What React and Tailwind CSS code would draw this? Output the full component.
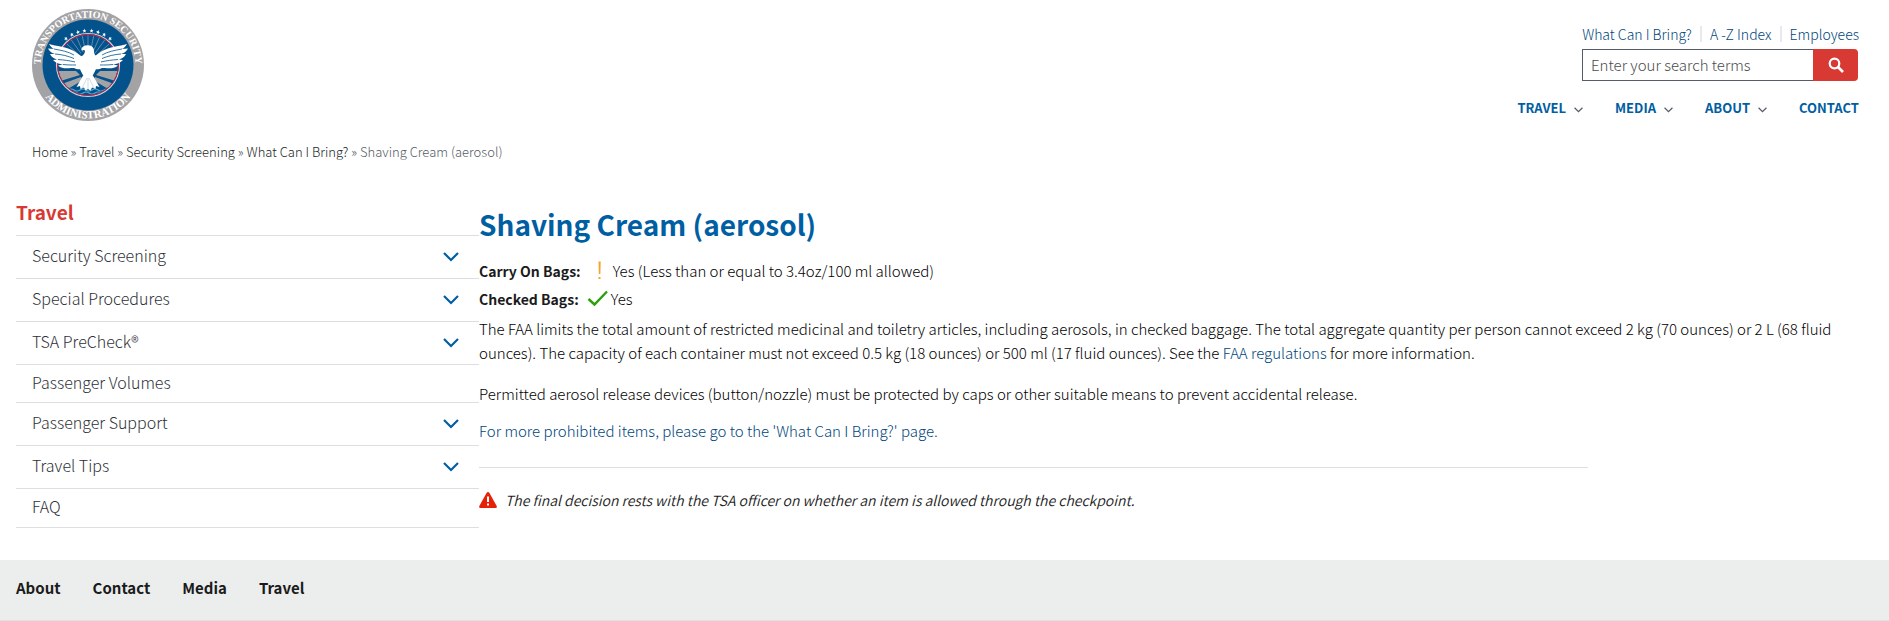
import React from 'react';

const topLinks = ['What Can I Bring?', 'A -Z Index', 'Employees'];
const mainNav = [
  { label: 'TRAVEL', menu: true },
  { label: 'MEDIA', menu: true },
  { label: 'ABOUT', menu: true },
  { label: 'CONTACT', menu: false },
];
const crumbs = ['Home', 'Travel', 'Security Screening', 'What Can I Bring?'];
const sideNav = [
  { label: 'Security Screening', menu: true },
  { label: 'Special Procedures', menu: true },
  { label: 'TSA PreCheck®', menu: true },
  { label: 'Passenger Volumes', menu: false },
  { label: 'Passenger Support', menu: true },
  { label: 'Travel Tips', menu: true },
  { label: 'FAQ', menu: false },
];
const footerLinks = ['About', 'Contact', 'Media', 'Travel'];

const rays = Array.from({ length: 15 }, (_, i) => -84 + i * 12);
const stars = [-40, -28, -17, -6, 6, 17, 28, 40];

function Seal() {
  return (
    <svg viewBox="0 0 112 112" className="size-28" role="img" aria-label="Transportation Security Administration">
      <defs>
        <path id="seal-top" d="M12 74 A47.500 47.500 0 1 1 100 74" />
        <path id="seal-bottom" d="M2.500 56 A53.500 53.500 0 0 0 109.500 56" />
        <clipPath id="seal-disc">
          <circle cx="56" cy="56" r="30" />
        </clipPath>
      </defs>
      <circle cx="56" cy="56" r="56" fill="#a3a3a6" />
      <circle cx="56" cy="56" r="45.500" fill="#03528b" />
      <g clipPath="url(#seal-disc)">
        {rays.map((a) => (
          <path key={a} d="M56 42 V22" stroke="#8fa9c4" strokeWidth="0.600" transform={`rotate(${a} 56 54)`} />
        ))}
        <path d="M24 62 L44 62 L48 66 L25 73z M27 76 L49 68 L51 71 L34 81z M88 62 L68 62 L64 66 L87 73z M85 76 L63 68 L61 71 L78 81z" fill="#a3a3a6" />
        <path d="M36 81 q3 -2 6 0 t6 0 t6 0 t6 0 t6 0 t6 0 t6 0 M39 84 q3 -2 6 0 t6 0 t6 0 t6 0 t6 0 t6 0" fill="none" stroke="#58abd4" strokeWidth="1.200" />
      </g>
      <circle cx="56" cy="56" r="31.500" fill="none" stroke="#c7d2e0" strokeWidth="1.200" />
      <circle cx="56" cy="56" r="30.500" fill="none" stroke="#d2213c" strokeWidth="1" />
      {stars.map((a) => (
        <path
          key={a}
          d="M56 19.400 L56.600 21 L58 21.100 L56.900 22 L57.300 23.500 L56 22.600 L54.700 23.500 L55.100 22 L54 21.100 L55.400 21z"
          fill="#ffffff"
          transform={`rotate(${a} 56 56)`}
        />
      ))}
      {[1, -1].map((s) => (
        <g key={s} transform={s === 1 ? undefined : 'translate(112 0) scale(-1 1)'}>
          <path
            d="M54 50 C49 47 46 45 42 42 C35 38 24 37 17 35 C19 38 20 39 22 40 L16 39.500 C18 43 20 44 23 45 L18 45 C20 49 23 50 26 50.500 L21 51 C24 54 27 55 31 55.500 L26 56.500 C30 60 35 59.500 39 59 L42 59 C45 61 49 60 54 60z"
            fill="#ffffff"
          />
          <path
            d="M22 40 C30 41.500 36 42.500 42 46 M23 45 C30 45.500 36 47 42 49.500 M26 50.500 C32 51 37 51.500 43 53 M31 55.500 C35 56 39 56 44 56"
            fill="none"
            stroke="#03528b"
            strokeWidth="0.800"
          />
        </g>
      ))}
      <path
        d="M49.500 40 C50 37.500 53 36 56.500 36.300 C60 36.600 62 39 62 42 C62 45 63 47 66 48 C67 56 63 62 61 66 H51 C49 62 45 56 46 48 C50 48 53 45.500 53 41.500 C52 40.800 51 40.800 49.500 41.500z"
        fill="#ffffff"
      />
      <path d="M52 65 L44.500 78 L48 77 L48.500 80 L52 78.500 L53.500 81.500 L56 80 L58.500 81.500 L60 78.500 L63.500 80 L64 77 L67.500 78 L60 65z" fill="#ffffff" />
      <path d="M55 69 L50 79 M57 69 L62 79 M56 69 V80" stroke="#9db6cd" strokeWidth="0.500" />
      <g fill="#ffffff" className="font-['Liberation_Serif',serif] font-bold">
        <text textAnchor="middle" className="text-[10px]">
          <textPath href="#seal-top" startOffset="50%">TRANSPORTATION SECURITY</textPath>
        </text>
        <text textAnchor="middle" className="text-[11px]">
          <textPath href="#seal-bottom" startOffset="50%">ADMINISTRATION</textPath>
        </text>
      </g>
    </svg>
  );
}

function Chevron({ className }) {
  return (
    <svg viewBox="0 0 16 10" fill="none" stroke="currentColor" strokeWidth="2.200" className={className} aria-hidden="true">
      <path d="M1 1 L8 8 L15 1" />
    </svg>
  );
}

export default function App() {
  return (
    <div className="bg-white font-['Noto_Sans_CJK_SC',sans-serif] text-[15px] leading-6 font-light text-black">
      <header className="flex items-start justify-between pr-[30px] pl-8">
        <a href="#home" className="mt-[9px]">
          <Seal />
        </a>
        <div className="flex flex-col items-end pt-[22px]">
          <ul className="flex items-center text-[14px] leading-6 text-[#00457c]">
            {topLinks.map((label, i) => (
              <li key={label} className="flex items-center">
                {i > 0 && <span className="mx-2 h-4 w-0.5 bg-[#e6e9ee]" />}
                <a href="#top">{label}</a>
              </li>
            ))}
          </ul>
          <form role="search" className="mt-[3px] mr-px flex h-8 w-[276px]">
            <label htmlFor="search" className="sr-only">Search</label>
            <input
              id="search"
              type="search"
              placeholder="Enter your search terms"
              className="min-w-0 flex-1 border border-r-0 border-[#565c65] px-2 text-[15px] text-[#1b1b1b] placeholder:text-[#4c4c4c]"
            />
            <button type="button" aria-label="Search" className="flex w-[45px] items-center justify-center rounded-r bg-[#d83933] text-white">
              <svg viewBox="0 0 16 16" className="size-4" fill="none" stroke="currentColor" aria-hidden="true">
                <circle cx="6.500" cy="6.500" r="4.800" strokeWidth="2.200" />
                <path d="M10 10 L15 15" strokeWidth="2.600" />
              </svg>
            </button>
          </form>
          <nav aria-label="Primary" className="mt-[15px] flex gap-8 text-[13px] font-bold text-[#005ea2]">
            {mainNav.map(({ label, menu }) =>
              menu ? (
                <button key={label} type="button" className="flex items-center gap-2 font-bold">
                  {label}
                  <Chevron className="mt-1 h-[6px] w-[9px] text-[#565c65]" />
                </button>
              ) : (
                <a key={label} href="#contact">{label}</a>
              ),
            )}
          </nav>
        </div>
      </header>

      <nav aria-label="Breadcrumb" className="mt-[19px] pl-8 text-[13px] text-[#565c65]">
        {crumbs.map((label) => (
          <React.Fragment key={label}>
            <a href="#crumb" className="text-[#1b1f26]">{label}</a>
            {' » '}
          </React.Fragment>
        ))}
        <span>Shaving Cream (aerosol)</span>
      </nav>

      <div className="flex pl-4">
        <aside className="mt-9 w-1/4 max-w-[463px] shrink-0">
          <h2 className="h-[35px] text-[19px] leading-6 font-bold text-[#d83933]">Travel</h2>
          <ul className="text-base leading-6 text-[#2e3138]">
            {sideNav.map(({ label, menu }) => (
              <li key={label} className="flex items-center justify-between border-t border-[#dcdee0] pr-5 pl-4 last:border-b last:pb-px">
                <a href="#section" className={menu ? 'pt-[7px] pb-[11px]' : 'pt-[5px] pb-2'}>
                  {label}
                </a>
                {menu && (
                  <button type="button" aria-label={`Expand ${label}`} className="text-[#005ea2]">
                    <Chevron className="h-2.5 w-4" />
                  </button>
                )}
              </li>
            ))}
          </ul>
        </aside>

        <main className="mt-10 min-w-0 flex-1 pr-6">
          <h1 className="text-[28px] leading-10 font-bold text-[#005ea2]">Shaving Cream (aerosol)</h1>
          <p className="mt-[13px] flex items-center leading-7">
            <strong className="text-[14px] font-bold text-[#1b1b1b]">Carry On Bags:</strong>
            <svg viewBox="0 0 32 24" className="h-6 w-8" aria-hidden="true">
              <path d="M17.500 2.500h2.200l-.3 12.500h-1.600z M17.500 18h2v2h-2z" fill="#f2a52e" />
            </svg>
            Yes (Less than or equal to 3.4oz/100 ml allowed)
          </p>
          <p className="flex items-center leading-7">
            <strong className="text-[14px] font-bold text-[#1b1b1b]">Checked Bags:</strong>
            <svg viewBox="0 0 32 24" className="h-6 w-8" aria-hidden="true">
              <path d="M9.500 12 L15.500 17.500 L28 4.500" fill="none" stroke="#2d9f0a" strokeWidth="2.400" />
            </svg>
            Yes
          </p>
          <p className="mt-1">
            The FAA limits the total amount of restricted medicinal and toiletry articles, including aerosols, in checked baggage. The total
            aggregate quantity per person cannot exceed 2 kg (70 ounces) or 2 L (68 fluid ounces). The capacity of each container must not exceed
            0.5 kg (18 ounces) or 500 ml (17 fluid ounces). See the{' '}
            <a href="#faa" className="text-[#00457c]">FAA regulations</a> for more information.
          </p>
          <p className="mt-[17px]">
            Permitted aerosol release devices (button/nozzle) must be protected by caps or other suitable means to prevent accidental release.
          </p>
          <p className="mt-[13px]">
            <a href="#bring" className="text-[#00457c]">For more prohibited items, please go to the 'What Can I Bring?' page.</a>
          </p>
          <hr className="mt-6 w-4/5 border-[#dcdee0]" />
          <p className="mt-5 flex items-center gap-2 text-[14px] font-[350] text-[#1b1b1b] italic">
            <svg viewBox="0 0 18 16" className="h-4 w-[18px] shrink-0" aria-hidden="true">
              <path d="M7.700 .8 Q9 -.8 10.300 .8 L17.700 14 Q18.300 16 16.500 16 H1.500 Q-.3 16 .3 14z" fill="#e52207" />
              <path d="M8 4.500h2v5.500H8z M8 11.500h2v2H8z" fill="#ffffff" />
            </svg>
            The final decision rests with the TSA officer on whether an item is allowed through the checkpoint.
          </p>
        </main>
      </div>

      <footer className="mt-8 border-b border-[#dfe1e2] bg-[#eceeee] px-4 pt-4 pb-5">
        <ul className="flex gap-8 font-bold text-[#1b1b1b]">
          {footerLinks.map((label) => (
            <li key={label}>
              <a href="#footer">{label}</a>
            </li>
          ))}
        </ul>
      </footer>
    </div>
  );
}
